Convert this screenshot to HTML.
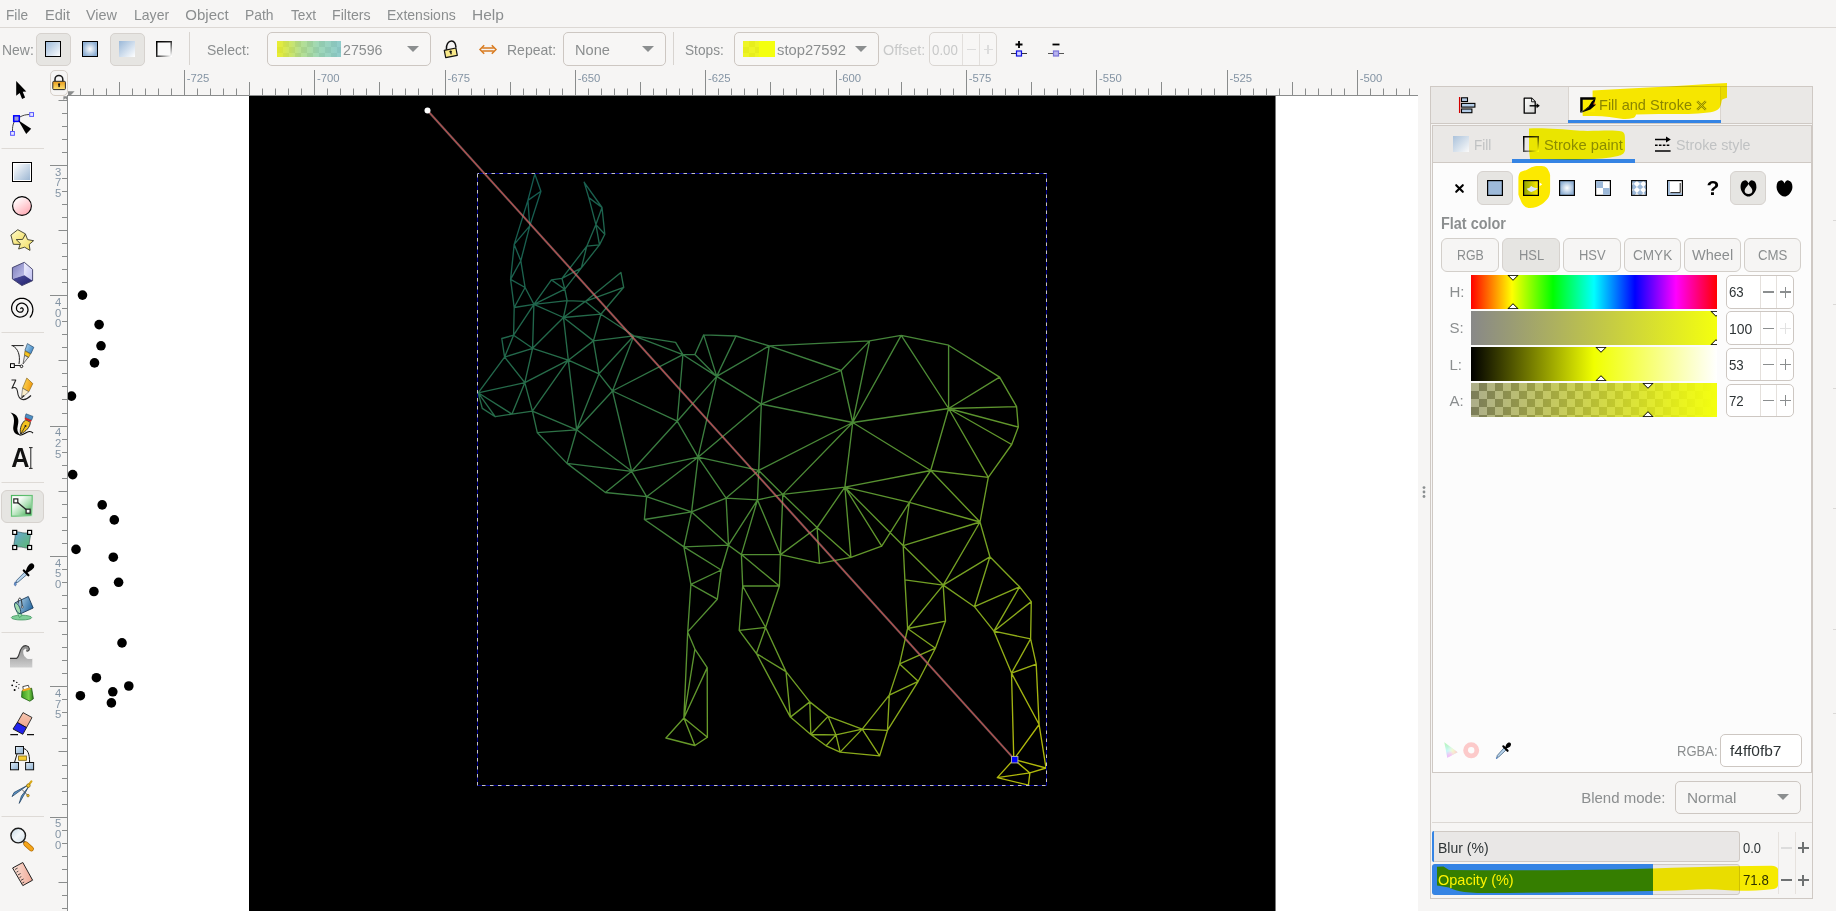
<!DOCTYPE html>
<html lang="en"><head><meta charset="utf-8"><title>Inkscape</title>
<style>
html,body{margin:0;padding:0}
body{width:1836px;height:911px;overflow:hidden;position:relative;background:#f6f5f4;font-family:"Liberation Sans",sans-serif;color:#8b8e8f}
.t{position:absolute;white-space:nowrap;color:#8b8e8f;transform-origin:0 50%}
.a{position:absolute;box-sizing:border-box}
.btn{position:absolute;box-sizing:border-box;border:1px solid #d3cfca;border-radius:5px;background:#f6f5f4}
.btn.on{background:#e6e5e2;border-color:#d6d2ce}
.combo{position:absolute;box-sizing:border-box;border:1px solid #cdc7c2;border-radius:5px;background:#f7f6f5}
.sep{position:absolute;background:#d8d4d0}
.arrow{position:absolute;width:0;height:0;border-left:6px solid transparent;border-right:6px solid transparent;border-top:6.3px solid #8b8e8f}
.chk{background-color:#fff;background-image:linear-gradient(45deg,#bbb 25%,transparent 25%,transparent 75%,#bbb 75%),linear-gradient(45deg,#bbb 25%,transparent 25%,transparent 75%,#bbb 75%);background-size:10px 10px;background-position:0 0,5px 5px}
#cv{position:absolute;left:0;top:0}
.rl text{font-family:"Liberation Sans",sans-serif;font-size:11.3px;fill:#8494a4}
svg{overflow:visible}
svg.i{position:absolute}
.hl{position:absolute;left:0;top:0;mix-blend-mode:multiply;pointer-events:none}
</style></head><body>
<div class="a" style="left:0;top:0;width:1836px;height:28px;border-bottom:1px solid #dcd8d4"></div><span class="t" style="left:5.7px;top:6.8px;font-size:15px;line-height:15px;transform:scaleX(0.911);">File</span><span class="t" style="left:44.6px;top:6.8px;font-size:15px;line-height:15px;transform:scaleX(0.971);">Edit</span><span class="t" style="left:86.2px;top:6.8px;font-size:15px;line-height:15px;transform:scaleX(0.963);">View</span><span class="t" style="left:134.2px;top:6.8px;font-size:15px;line-height:15px;transform:scaleX(0.936);">Layer</span><span class="t" style="left:185.3px;top:6.8px;font-size:15px;line-height:15px;">Object</span><span class="t" style="left:245.1px;top:6.8px;font-size:15px;line-height:15px;transform:scaleX(0.926);">Path</span><span class="t" style="left:290.5px;top:6.8px;font-size:15px;line-height:15px;transform:scaleX(0.913);">Text</span><span class="t" style="left:332.0px;top:6.8px;font-size:15px;line-height:15px;transform:scaleX(0.946);">Filters</span><span class="t" style="left:387.3px;top:6.8px;font-size:15px;line-height:15px;transform:scaleX(0.937);">Extensions</span><span class="t" style="left:472.0px;top:6.8px;font-size:15px;line-height:15px;transform:scaleX(1.036);">Help</span><span class="t" style="left:1.8px;top:41.6px;font-size:15px;line-height:15px;transform:scaleX(0.930);">New:</span><div class="btn on" style="left:35.5px;top:32.6px;width:35px;height:33px"></div><svg class="i" style="left:45px;top:41.2px" width="16" height="16" viewBox="0 0 16 16"><defs><linearGradient id="gi1" x1="0" y1="0" x2="1" y2="1"><stop offset="0" stop-color="#9ab8d8"/><stop offset="1" stop-color="#fff"/></linearGradient></defs><rect x=".5" y=".5" width="15" height="15" fill="url(#gi1)" stroke="#000"/></svg><svg class="i" style="left:82px;top:41.2px" width="16" height="16" viewBox="0 0 16 16"><defs><radialGradient id="gi2"><stop offset="0" stop-color="#fff"/><stop offset="1" stop-color="#8fb0d4"/></radialGradient></defs><rect x=".5" y=".5" width="15" height="15" fill="url(#gi2)" stroke="#000"/></svg><div class="btn on" style="left:109.5px;top:32.6px;width:35px;height:33px"></div><svg class="i" style="left:119px;top:41.2px" width="16" height="16" viewBox="0 0 16 16"><defs><linearGradient id="gi3" x1="0" y1="0" x2="1" y2="1"><stop offset="0" stop-color="#9ab8d8"/><stop offset="1" stop-color="#fff"/></linearGradient></defs><rect x="0" y="0" width="16" height="16" fill="url(#gi3)"/></svg><svg class="i" style="left:156px;top:41.2px" width="16" height="16" viewBox="0 0 16 16"><defs><linearGradient id="gi4" x1="0" y1="0" x2="1" y2="1"><stop offset="0" stop-color="#000"/><stop offset=".45" stop-color="#222"/><stop offset="1" stop-color="#fff"/></linearGradient></defs><rect x=".75" y=".75" width="14.5" height="14.5" fill="#fafafa" stroke="url(#gi4)" stroke-width="1.5"/></svg><div class="sep" style="left:189px;top:32px;width:1px;height:33px"></div><span class="t" style="left:207.4px;top:41.6px;font-size:15px;line-height:15px;transform:scaleX(0.932);">Select:</span><div class="combo" style="left:267px;top:32.3px;width:163.7px;height:33.3px"></div><div class="a chk" style="left:277px;top:40.9px;width:64px;height:16px;background-color:#fff;background-size:12px 12px;background-position:0 0,6px 6px"><div style="width:100%;height:100%;background:linear-gradient(90deg,rgba(232,236,30,.92),rgba(170,218,120,.84) 35%,rgba(140,208,170,.84) 65%,rgba(128,196,196,.88))"></div></div><span class="t" style="left:343.4px;top:41.6px;font-size:15px;line-height:15px;transform:scaleX(0.947);">27596</span><div class="arrow" style="left:406.9px;top:46.1px"></div><svg class="i" style="left:442px;top:39px" width="18" height="20" viewBox="0 0 18 20"><path d="M4.4 10.8C3.9 5.4 6.4 2 9.7 2.1 12.4 2.2 13.7 5 14 8.6" fill="none" stroke="#111" stroke-width="1.5"/><path d="M2.3 11.3L13.9 9 15.3 16.3 3.7 18.6Z" fill="#f9e98a" stroke="#111" stroke-width="1.2" stroke-linejoin="round"/><circle cx="8.6" cy="12.6" r="1.2" fill="#111"/><path d="M8.7 13L9.2 15.3" stroke="#111" stroke-width="1.3"/></svg><svg class="i" style="left:478.5px;top:43.5px" width="18" height="11" viewBox="0 0 18 11"><path d="M3.2 4h11.6M3.2 7h11.6" stroke="#d87a1e" stroke-width="1.3" fill="none"/><path d="M5.2 1.2L1 5.5l4.2 4.3M12.8 1.2L17 5.5l-4.2 4.3" stroke="#d87a1e" stroke-width="1.5" fill="none"/></svg><span class="t" style="left:506.8px;top:41.6px;font-size:15px;line-height:15px;transform:scaleX(0.933);">Repeat:</span><div class="combo" style="left:563.2px;top:32.3px;width:102.4px;height:33.3px"></div><span class="t" style="left:575.4px;top:41.6px;font-size:15px;line-height:15px;transform:scaleX(0.974);">None</span><div class="arrow" style="left:642.1px;top:46.1px"></div><div class="sep" style="left:673.3px;top:32px;width:1px;height:33px"></div><span class="t" style="left:684.5px;top:41.6px;font-size:15px;line-height:15px;transform:scaleX(0.912);">Stops:</span><div class="combo" style="left:733.5px;top:32.3px;width:145px;height:33.3px"></div><div class="a chk" style="left:743px;top:40.8px;width:15.7px;height:16px;background-size:12px 12px;background-position:0 0,6px 6px"><div style="width:100%;height:100%;background:rgba(236,244,12,.9)"></div></div><div class="a" style="left:758.7px;top:40.8px;width:16.4px;height:16px;background:#f4ff0f"></div><span class="t" style="left:777.1px;top:41.6px;font-size:15px;line-height:15px;transform:scaleX(0.984);">stop27592</span><div class="arrow" style="left:855.2px;top:46.1px"></div><span class="t" style="left:883.3px;top:41.6px;font-size:15px;line-height:15px;transform:scaleX(0.960);color:#c8c9c9;">Offset:</span><div class="combo" style="left:929px;top:32.3px;width:68px;height:33.3px;border-color:#dad6d2"></div><div class="sep" style="left:962px;top:33.6px;width:1px;height:31px;background:#e2dfdc"></div><div class="sep" style="left:979px;top:33.6px;width:1px;height:31px;background:#e2dfdc"></div><span class="t" style="left:932.3px;top:41.6px;font-size:15px;line-height:15px;transform:scaleX(0.885);color:#c8c9c9;">0.00</span><div class="a" style="left:966.5px;top:48.6px;width:9px;height:1.3px;background:#dcdcdc"></div><div class="a" style="left:983.5px;top:48.6px;width:9px;height:1.3px;background:#dcdcdc"></div><div class="a" style="left:987.4px;top:44.7px;width:1.3px;height:9px;background:#dcdcdc"></div><svg class="i" style="left:1011px;top:40px" width="16" height="18" viewBox="0 0 16 18"><path d="M8 1v7M4.5 4.5h7" stroke="#000" stroke-width="1.8"/><path d="M0 13.5h16" stroke="#333" stroke-width="1"/><rect x="5.5" y="11" width="5" height="5" fill="#cfd0ff" stroke="#1010e0" stroke-width="1.2"/></svg><svg class="i" style="left:1048px;top:40px" width="16" height="18" viewBox="0 0 16 18"><path d="M4.5 4.5h7" stroke="#000" stroke-width="1.8"/><path d="M0 13.5h16" stroke="#555" stroke-width="1"/><rect x="5.5" y="11" width="5" height="5" fill="#b8b4ee" stroke="#7a74d8" stroke-width="1.2"/></svg>
<div class="btn" style="left:50px;top:70px;width:18px;height:25.5px;border-color:#d6cfc8;border-radius:5px;background:#f6f5f4"></div>
<div class="btn on" style="left:1.2px;top:490.2px;width:42.6px;height:32.8px;border-radius:6px"></div>
<svg id="tb" class="i" style="left:0;top:0" width="80" height="911" viewBox="0 0 80 911">
<defs>
<linearGradient id="t_rect" x1="0" y1="0" x2="1" y2="1"><stop offset="0" stop-color="#fff"/><stop offset="1" stop-color="#9db7d3"/></linearGradient>
<linearGradient id="t_circ" x1="0.2" y1="0.1" x2="0.8" y2="0.95"><stop offset="0" stop-color="#fff"/><stop offset="1" stop-color="#ffaab4"/></linearGradient>
<linearGradient id="t_star" x1="0" y1="0" x2="1" y2="1"><stop offset="0" stop-color="#fffbd0"/><stop offset="1" stop-color="#f2dc55"/></linearGradient>
<linearGradient id="t_boxl" x1="0" y1="0" x2="1" y2="1"><stop offset="0" stop-color="#7a7ab8"/><stop offset="1" stop-color="#c4c4ee"/></linearGradient>
<linearGradient id="t_boxr" x1="0" y1="0" x2="1" y2="1"><stop offset="0" stop-color="#f0f0ff"/><stop offset="1" stop-color="#c0c0f0"/></linearGradient>
<linearGradient id="t_boxb" x1="0" y1="0" x2="1" y2="1"><stop offset="0" stop-color="#5050a0"/><stop offset="1" stop-color="#20206a"/></linearGradient>
<linearGradient id="t_grad" x1="0" y1="0" x2="1" y2="1"><stop offset="0" stop-color="#ffffff"/><stop offset="0.3" stop-color="#f2faf3"/><stop offset="0.62" stop-color="#a6dcae"/><stop offset="1" stop-color="#38a64c"/></linearGradient><linearGradient id="t_gradb" x1="0" y1="0" x2="1" y2="1"><stop offset="0" stop-color="#48b45c"/><stop offset="0.6" stop-color="#6cc47c"/><stop offset="1" stop-color="#d8f0dc"/></linearGradient>
<linearGradient id="t_mesh" x1="0" y1="0" x2="1" y2="1"><stop offset="0" stop-color="#6aa6dc"/><stop offset="0.55" stop-color="#62b09a"/><stop offset="1" stop-color="#5cb874"/></linearGradient>
<linearGradient id="t_lock" x1="0" y1="0" x2="0" y2="1"><stop offset="0" stop-color="#e89a18"/><stop offset="1" stop-color="#ffe372"/></linearGradient>
<linearGradient id="t_tweak" x1="0" y1="0" x2="0" y2="1"><stop offset="0" stop-color="#8a8a8a"/><stop offset="1" stop-color="#cfcfcf"/></linearGradient>
<linearGradient id="t_can" x1="0" y1="0" x2="1" y2="0"><stop offset="0" stop-color="#3c9a22"/><stop offset="0.6" stop-color="#7ad04a"/><stop offset="1" stop-color="#2a7a18"/></linearGradient>
<linearGradient id="t_bucket" x1="0" y1="0" x2="1" y2="0.4"><stop offset="0" stop-color="#cfe8f4"/><stop offset="1" stop-color="#2f6fa6"/></linearGradient>
<linearGradient id="t_pen" x1="0" y1="0" x2="1" y2="0.6"><stop offset="0" stop-color="#b8dcf4"/><stop offset="1" stop-color="#3f86c2"/></linearGradient>
<linearGradient id="t_pencil" x1="0" y1="0" x2="1" y2="0.3"><stop offset="0" stop-color="#ffe060"/><stop offset="1" stop-color="#f09a10"/></linearGradient>
<linearGradient id="t_rul" x1="0" y1="0" x2="1" y2="0"><stop offset="0" stop-color="#fbe4da"/><stop offset="1" stop-color="#efa896"/></linearGradient>
<linearGradient id="t_lens" x1="0" y1="0" x2="1" y2="1"><stop offset="0" stop-color="#c4d8e6"/><stop offset="0.5" stop-color="#f2f7fa"/><stop offset="1" stop-color="#cfdde8"/></linearGradient>
<linearGradient id="t_sq" x1="0" y1="0" x2="1" y2="1"><stop offset="0" stop-color="#dce9f4"/><stop offset="1" stop-color="#8fb2d2"/></linearGradient>
<linearGradient id="t_era" x1="0" y1="0" x2="0" y2="1"><stop offset="0" stop-color="#f6c6b0"/><stop offset="1" stop-color="#eda48c"/></linearGradient>
</defs>
<!-- separators -->
<g stroke="#dedad6" stroke-width="1"><path d="M1.5 148.5H44M1.5 332.5H44M1.5 482.5H44M1.5 632.5H44M1.5 816.5H44"/></g>
<!-- lock -->
<path d="M55 81.5v-2.2a3.9 3.9 0 0 1 7.8 0v2.2" fill="none" stroke="#1a1a1a" stroke-width="1.5"/>
<rect x="52.8" y="81.3" width="12.6" height="8.3" rx="1" fill="url(#t_lock)" stroke="#2a2a2a" stroke-width="1"/>
<circle cx="59.1" cy="84.3" r="1.1" fill="#111"/><rect x="58.4" y="84.5" width="1.4" height="2.6" fill="#111"/>
<!-- ruler corner marks -->
<path d="M68 91.3h6.6l-3.6 3.6h-3z" fill="#8a8c8c"/><path d="M63.4 96.5h3.8v3.4z" fill="#8a8c8c" transform="translate(0 0)"/><path d="M63.4 96.6h3.8l-3.8 3.4z" fill="#8a8c8c"/>
<!-- selector arrow -->
<path d="M16.2 81V95.8L19.7 92.9 22.1 98.9 25.1 97.4 22.7 91.8 26.3 91.4Z" fill="#000"/>
<!-- node tool -->
<path d="M19.5 117.2C23 115.2 26 114.6 29.3 114.5M14.3 121.5C12.6 125 12.4 128 12.5 131" fill="none" stroke="#444" stroke-width="1"/>
<rect x="13.7" y="115.8" width="5.6" height="5.6" fill="#9a9adc" stroke="#0000ff" stroke-width="1.5"/>
<rect x="29.7" y="112.6" width="3.8" height="3.8" fill="#e8e8ff" stroke="#5656ff" stroke-width="1"/>
<rect x="10.6" y="131.5" width="3.8" height="3.8" fill="#e8e8ff" stroke="#5656ff" stroke-width="1"/>
<path d="M18.3 120.3L31.2 128.8 26.2 134.1Z" fill="#000"/>
<!-- rect -->
<rect x="12.5" y="162.5" width="19" height="19" fill="#fff" stroke="#000" stroke-width="1"/><rect x="14" y="164" width="16" height="16" fill="url(#t_rect)"/>
<!-- circle -->
<circle cx="22" cy="206" r="9.4" fill="url(#t_circ)" stroke="#000" stroke-width="1.1"/>
<!-- star -->
<path d="M17.8 229.7L25.5 233.9 22.6 244.5 13.3 244.3 10.9 235Z" fill="url(#t_star)" stroke="#3a3a2a" stroke-width=".9" stroke-linejoin="round"/>
<path d="M25.5 234.2L27.6 239.6 33.6 240.7 29.2 244.4 30 250.4 24.6 247.2 18.6 249 20.4 243.6 16.2 239.6 22.6 239.4Z" fill="url(#t_star)" stroke="#3a3a2a" stroke-width=".9" stroke-linejoin="round"/>
<!-- 3d box -->
<path d="M24.3 262.3L12.4 267.6V278.9L24.3 275.3Z" fill="url(#t_boxl)"/>
<path d="M24.3 262.3L32.6 269.4V280.7L24.3 275.3Z" fill="url(#t_boxr)"/>
<path d="M24.3 275.3L32.6 280.7 21.9 285.6 12.4 278.9Z" fill="url(#t_boxb)"/>
<path d="M24.3 262.3L32.6 269.4V280.7L21.9 285.6 12.4 278.9V267.6Z" fill="none" stroke="#3c3c66" stroke-width=".9" stroke-linejoin="round"/>
<!-- spiral -->
<path d="M20.8 308.6L20.8 308.4L20.9 308.2L21.0 308.1L21.1 308.0L21.3 307.9L21.6 307.9L21.8 307.9L22.1 307.9L22.4 308.1L22.6 308.3L22.8 308.5L23.0 308.8L23.1 309.2L23.2 309.6L23.1 310.0L23.0 310.4L22.8 310.8L22.5 311.2L22.2 311.6L21.7 311.9L21.2 312.1L20.7 312.2L20.1 312.2L19.5 312.2L18.9 312.0L18.3 311.6L17.7 311.2L17.3 310.7L16.9 310.1L16.6 309.4L16.5 308.6L16.5 307.8L16.6 307.0L16.9 306.2L17.3 305.4L17.9 304.8L18.5 304.2L19.3 303.7L20.2 303.4L21.2 303.2L22.2 303.2L23.2 303.3L24.2 303.7L25.1 304.2L26.0 304.9L26.7 305.7L27.3 306.7L27.7 307.8L27.9 308.9L28.0 310.1L27.8 311.3L27.4 312.5L26.8 313.6L26.0 314.7L25.0 315.5L23.8 316.2L22.6 316.7L21.2 317.0L19.8 317.1L18.4 316.9L17.0 316.4L15.7 315.8L14.5 314.9L13.5 313.7L12.7 312.4L12.0 311.0L11.7 309.5L11.6 307.8L11.8 306.2L12.3 304.6L13.0 303.1L14.0 301.8L15.2 300.6L16.7 299.6L18.3 298.9L20.0 298.4L21.9 298.3L23.7 298.4L25.5 298.9L27.2 299.7L28.8 300.8L30.1 302.2L31.3 303.8L32.1 305.5L32.6 307.5L32.9 309.5L32.7 311.5L32.2 313.5L31.4 315.4L30.2 317.2" fill="none" stroke="#000" stroke-width="1.25" stroke-linecap="round" stroke-linejoin="round"/>
<!-- bezier pen -->
<path d="M11.5 345.6H23.6M12.4 345.6C18 348.5 20.5 355 19 364" fill="none" stroke="#222" stroke-width="1"/>
<path d="M14.4 365.5H20.4" stroke="#222" stroke-width="1"/><rect x="10.5" y="363.7" width="3.8" height="3.8" fill="#fff" stroke="#000" stroke-width="1"/><circle cx="21.5" cy="366.3" r="1.3" fill="#fff" stroke="#000" stroke-width=".9"/>
<path d="M27.4 343.6L33.8 347.3 30.9 353.8 24.9 350.4Z" fill="url(#t_pen)" stroke="#2a4a6a" stroke-width=".7"/>
<path d="M25 351L30.4 354 28.6 357.4 24.4 355.1Z" fill="#f4c21e" stroke="#6a5210" stroke-width=".6"/>
<path d="M24.6 355.3L28.3 357.3 23 364Z" fill="#e8e8e8" stroke="#333" stroke-width=".7"/>
<!-- pencil -->
<path d="M11.5 380H15.8L12 388.3C14.5 386.5 17 388 17.4 391 17.8 395 19.5 399.8 23.5 399.6 26.5 399.4 29 397.5 31 395.5" fill="none" stroke="#222" stroke-width="1.1" stroke-linejoin="round"/>
<path d="M26.8 378L32.8 383.6 28.8 391.8 22.6 388.2Z" fill="url(#t_pencil)" stroke="#7a5a10" stroke-width=".6"/>
<path d="M22.6 388.2L28.8 391.8 21.3 398.4Z" fill="#f8ecc8" stroke="#555" stroke-width=".6"/>
<path d="M23 395L24.7 396 21.3 398.4Z" fill="#222"/>
<!-- calligraphy -->
<path d="M10.4 412.6C17.5 414 19.6 419.5 17.8 425.5 16.6 429.5 17.5 433 20.5 435.2 15.5 435.2 12.3 431.5 13.4 426 14.6 420.5 14.5 416 10.4 412.6Z" fill="#000"/>
<path d="M19.5 435.3C24 435.3 26 431.5 29.5 431.5 31 431.5 32.3 432.3 33 433.2" fill="none" stroke="#000" stroke-width="1.1"/>
<path d="M25.8 419.8L30.3 422.2C30.3 427 26 431.5 20.5 434 19.5 428 21.8 422.5 25.8 419.8Z" fill="#f4c21e" stroke="#222" stroke-width=".9"/>
<path d="M21 433.5L25.3 426.3" stroke="#222" stroke-width=".8"/><circle cx="25.5" cy="426" r="1" fill="#222"/>
<path d="M26 413.8L33 416.4 31.6 420.2 25 417.5Z" fill="#4e8fc4" stroke="#24486a" stroke-width=".6"/>
<path d="M25 417.6L31.6 420.3 31 422 24.6 419.3Z" fill="#d02020"/>
<!-- text tool -->
<text transform="translate(11.2 467.4) scale(.9 1)" font-family="Liberation Sans, sans-serif" font-weight="bold" font-size="28" fill="#111">A</text>
<path d="M30.8 448V468M29 447.6h3.6M29 468.4h3.6" stroke="#222" stroke-width="1"/>
<!-- gradient tool -->
<rect x="10.9" y="494.9" width="21.9" height="21.9" fill="url(#t_gradb)"/><rect x="12.1" y="496.1" width="19.5" height="19.5" fill="url(#t_grad)"/>
<path d="M15.8 500.9L28.1 511.2" stroke="#222" stroke-width="1.3"/>
<rect x="13.8" y="498.9" width="4" height="4" fill="#fff" stroke="#222" stroke-width="1.2"/><rect x="26.1" y="509.2" width="4" height="4" fill="#fff" stroke="#222" stroke-width="1.2"/>
<!-- mesh gradient -->
<path d="M14.7 532.4C18 530.3 22.5 534.6 29.6 532.4 32 536 28 541.5 29.6 547.5 26 549.6 21.5 545.3 14.7 547.5 12.4 544 16.4 538.5 14.7 532.4Z" fill="url(#t_mesh)" stroke="#2a4a4a" stroke-width=".6"/>
<g fill="#fff" stroke="#000" stroke-width="1.2"><rect x="12.7" y="530.4" width="4" height="4"/><rect x="27.6" y="530.4" width="4" height="4"/><rect x="12.7" y="545.5" width="4" height="4"/><rect x="27.6" y="545.5" width="4" height="4"/></g>
<!-- dropper -->
<path d="M25 571.8L27.3 574.2 18 582.2 16 582.6 16.5 580.4Z" fill="#b8d4ec" stroke="#3a5a7a" stroke-width=".8"/>
<path d="M23.8 570.5L28.4 575.3" stroke="#000" stroke-width="2.2" stroke-linecap="round"/>
<path d="M26.3 572.5C27 569.5 28.5 566 30.5 564.5 32.5 563.5 34.2 565.3 33.2 567.3 31.8 569.3 28.5 571 26.3 572.5Z" fill="#000" stroke="#000" stroke-width="1.6" stroke-linejoin="round"/>
<path d="M15.3 581.8C16.6 583.6 16.6 585.4 15.3 585.8 14 585.4 14 583.6 15.3 581.8Z" fill="#6aa0d8" stroke="#2a4a8a" stroke-width=".6"/>
<!-- bucket -->
<ellipse cx="21.5" cy="617.6" rx="10.2" ry="2.4" fill="#7fcf98" stroke="#2f8a50" stroke-width=".7"/>
<path d="M15 603.5C15.5 609 17 613 19.5 617.5L22 615.5C20 611.5 19.5 608 19.5 604.5Z" fill="#8fd8a4" stroke="#2f8a50" stroke-width=".6"/>
<path d="M15 602.8L28.3 596.5 33.2 608 20.4 613.8Z" fill="url(#t_bucket)" stroke="#1a3a5a" stroke-width=".9" stroke-linejoin="round"/>
<ellipse cx="17.6" cy="608.2" rx="2.2" ry="5.8" transform="rotate(-24 17.6 608.2)" fill="#9fdcae" stroke="#1a3a5a" stroke-width=".8"/>
<path d="M18.3 603.5C17.5 598 20.5 596 21.5 600.5L22.3 606.8" fill="none" stroke="#222" stroke-width=".9"/><circle cx="22.3" cy="607" r="1" fill="#fff" stroke="#222" stroke-width=".6"/>
<!-- tweak -->
<path d="M10 658.4H16.5C19.5 657 19 651 22 647.5 24.5 644.5 28.8 645.5 29.3 648.5 29.6 650.8 27.5 651.8 26.3 650.6 27 648.5 24.8 648.3 24 650 22.8 653 24.8 658 28 658.4H32.3V667.5H10Z" fill="url(#t_tweak)"/>
<path d="M10 658.4H16.5C19.5 657 19 651 22 647.5 24.5 644.5 28.8 645.5 29.3 648.5 29.6 650.8 27.5 651.8 26.3 650.6" fill="none" stroke="#3a3a3a" stroke-width="1.1"/>
<path d="M24 650C22.8 653 24.8 658 28 658.4H32.3" fill="none" stroke="#fff" stroke-width=".8"/>
<!-- spray -->
<g fill="#000"><circle cx="13.8" cy="680.8" r=".9"/><circle cx="12.2" cy="685.3" r=".9"/><circle cx="14.6" cy="690" r="1"/><circle cx="16.8" cy="682.4" r=".7"/><circle cx="16.2" cy="686.5" r=".7"/><circle cx="19" cy="684.5" r=".6"/><circle cx="18.6" cy="688" r=".6"/></g>
<path d="M22.8 686.6L28.3 685.3 29.4 688.6 23.4 690Z" fill="#fff" stroke="#222" stroke-width=".8"/>
<path d="M22 690.8L31.6 688.2 33.4 698.8 29.8 701.2 21.6 697.2Z" fill="url(#t_can)" stroke="#1a5a10" stroke-width=".8" stroke-linejoin="round"/>
<path d="M22.4 689.6L30.2 687.5 30.6 689.4 22.6 691.6Z" fill="#f0a820"/>
<!-- eraser -->
<path d="M23 712.6L32 717.5 26.5 727.6 17.3 722.5Z" fill="url(#t_era)" stroke="#222" stroke-width=".9" stroke-linejoin="round"/>
<path d="M17.3 722.5L26.5 727.6 22.8 734.3 13 729Z" fill="#2222ee" stroke="#111" stroke-width=".9" stroke-linejoin="round"/>
<path d="M10.3 734.6H18M27 734.6H34" stroke="#111" stroke-width="1.1"/>
<!-- connector -->
<path d="M17 754L14.5 762.5M23.5 748.5C27.5 749.5 29.6 753 29.6 762.5" fill="none" stroke="#111" stroke-width="1"/>
<g stroke="#111" stroke-width="1"><rect x="15.5" y="746.5" width="8" height="7.3" fill="url(#t_sq)"/><rect x="10.5" y="762.5" width="8" height="7.3" fill="url(#t_sq)"/><rect x="25.6" y="762.5" width="8" height="7.3" fill="url(#t_sq)"/></g>
<rect x="18.6" y="756" width="7.8" height="4.3" fill="#f6cc30" stroke="#7a6210" stroke-width=".8"/>
<!-- calipers -->
<path d="M28 785L12 796.6 14 792.5Z" fill="#5a94c6" stroke="#1a3a5a" stroke-width=".7" stroke-linejoin="round"/>
<path d="M28.8 786.4L19.2 803.4 21.4 796Z" fill="#5a94c6" stroke="#1a3a5a" stroke-width=".7" stroke-linejoin="round"/>
<path d="M22 789.5L28 795.6" stroke="#444" stroke-width=".8"/><circle cx="28" cy="795.6" r="1.3" fill="#e8b820" stroke="#6a5210" stroke-width=".5"/>
<path d="M27.6 786.4L31.4 781.3" stroke="#d8a818" stroke-width="2.2" stroke-linecap="round"/><circle cx="28.4" cy="785.6" r="1.8" fill="#f0c428" stroke="#6a5210" stroke-width=".6"/>
<!-- zoom -->
<path d="M23.5 841.5L26 844" stroke="#555" stroke-width="2.6"/>
<path d="M25.8 843.8L31.4 848.8" stroke="#b06a00" stroke-width="5" stroke-linecap="round"/><path d="M25.8 843.8L31.4 848.8" stroke="#f5a51a" stroke-width="3.6" stroke-linecap="round"/>
<circle cx="18.2" cy="835.6" r="7.3" fill="url(#t_lens)" stroke="#1c1c1c" stroke-width="1.4"/>
<!-- measure ruler -->
<path d="M22.8 862.5L32.6 880.2 22.8 885.6 12.6 868Z" fill="url(#t_rul)" stroke="#222" stroke-width="1" stroke-linejoin="round"/>
<path d="M15 869.5l2.6-1.4M16.5 872.2l1.8-1M18 874.9l2.6-1.4M19.5 877.6l1.8-1M21 880.3l2.6-1.4M22.4 883l1.8-1" stroke="#222" stroke-width=".8"/>
</svg>

<svg id="cv" width="1836" height="911" viewBox="0 0 1836 911">
<defs>
<linearGradient id="bg" gradientUnits="userSpaceOnUse" x1="427.5" y1="110.5" x2="1014.5" y2="759.4">
<stop offset="0.0" stop-color="#064c54"/><stop offset="0.1" stop-color="#105652"/><stop offset="0.2" stop-color="#1a604e"/><stop offset="0.3" stop-color="#256b4a"/><stop offset="0.4" stop-color="#317544"/><stop offset="0.5" stop-color="#3e803d"/><stop offset="0.6" stop-color="#4d8b35"/><stop offset="0.7" stop-color="#60962c"/><stop offset="0.8" stop-color="#76a122"/><stop offset="0.9" stop-color="#91ac17"/><stop offset="1.0" stop-color="#b0b80b"/>
</linearGradient>
<clipPath id="cc"><rect x="68" y="96" width="1350" height="815"/></clipPath>
</defs>
<rect x="68" y="96" width="1350" height="815" fill="#fff"/>
<g clip-path="url(#cc)">
<rect x="249" y="96" width="1027" height="830" fill="#000"/>
<rect x="1275" y="96" width="1" height="815" fill="#7a7a7a"/>
<g fill="#000"><circle cx="82.5" cy="295.1" r="4.8"/><circle cx="99.1" cy="324.6" r="4.8"/><circle cx="101" cy="345.8" r="4.8"/><circle cx="94.5" cy="362.9" r="4.8"/><circle cx="71.5" cy="396.1" r="4.8"/><circle cx="72.7" cy="474.6" r="4.8"/><circle cx="102.2" cy="504.9" r="4.8"/><circle cx="114.3" cy="519.9" r="4.8"/><circle cx="76" cy="549.4" r="4.8"/><circle cx="113.3" cy="557.2" r="4.8"/><circle cx="118.6" cy="582.3" r="4.8"/><circle cx="93.9" cy="591.5" r="4.8"/><circle cx="122" cy="642.9" r="4.8"/><circle cx="96.4" cy="677.7" r="4.8"/><circle cx="128.8" cy="686" r="4.8"/><circle cx="112.8" cy="691.8" r="4.8"/><circle cx="80.4" cy="695.7" r="4.8"/><circle cx="111.4" cy="702.9" r="4.8"/></g>
<path d="M534.8 174.1L540.9 191.3M534.8 174.1L527.9 200.4M540.9 191.3L527.9 200.4M540.9 191.3L529.8 225.9M527.9 200.4L529.8 225.9M527.9 200.4L514.2 244.4M529.8 225.9L514.2 244.4M529.8 225.9L520.8 260.8M514.2 244.4L520.8 260.8M514.2 244.4L510.6 279.4M520.8 260.8L510.6 279.4M520.8 260.8L525.1 287.5M510.6 279.4L525.1 287.5M510.6 279.4L514.2 307.5M525.1 287.5L514.2 307.5M525.1 287.5L533.9 304.3M514.2 307.5L533.9 304.3M584.2 182.3L588.8 197.6M584.2 182.3L602.0 207.5M588.8 197.6L602.0 207.5M588.8 197.6L595.9 224.6M602.0 207.5L595.9 224.6M602.0 207.5L604.8 234.2M595.9 224.6L604.8 234.2M595.9 224.6L586.8 246.2M595.9 224.6L599.5 244.9M604.8 234.2L599.5 244.9M586.8 246.2L599.5 244.9M586.8 246.2L581.4 267.9M599.5 244.9L581.4 267.9M586.8 246.2L562.0 278.3M581.4 267.9L562.0 278.3M581.4 267.9L564.8 289.2M562.0 278.3L551.4 279.9M562.0 278.3L564.8 289.2M551.4 279.9L564.8 289.2M551.4 279.9L533.9 304.3M564.8 289.2L533.9 304.3M564.8 289.2L567.1 300.6M533.9 304.3L567.1 300.6M567.1 300.6L585.3 301.4M567.1 300.6L563.5 317.5M533.9 304.3L563.5 317.5M563.5 317.5L585.3 301.4M585.3 301.4L620.9 272.4M620.9 272.4L623.7 287.3M585.3 301.4L623.7 287.3M623.7 287.3L600.9 314.2M585.3 301.4L600.9 314.2M600.9 314.2L633.9 335.8M563.5 317.5L600.9 314.2M600.9 314.2L593.4 340.9M563.5 317.5L593.4 340.9M563.5 317.5L568.3 360.2M563.5 317.5L532.6 348.3M533.9 304.3L532.6 348.3M533.9 304.3L513.6 335.2M514.2 307.5L513.6 335.2M513.6 335.2L501.8 338.5M501.8 338.5L504.6 357.1M513.6 335.2L504.6 357.1M513.6 335.2L532.6 348.3M504.6 357.1L532.6 348.3M532.6 348.3L568.3 360.2M532.6 348.3L524.8 382.7M504.6 357.1L524.8 382.7M504.6 357.1L478.2 392.8M524.8 382.7L478.2 392.8M568.3 360.2L524.8 382.7M593.4 340.9L568.3 360.2M593.4 340.9L633.9 335.8M593.4 340.9L599.0 373.8M568.3 360.2L599.0 373.8M568.3 360.2L532.4 411.1M568.3 360.2L576.7 429.8M524.8 382.7L532.4 411.1M524.8 382.7L512.0 414.1M478.2 392.8L482.3 408.4M478.2 392.8L495.2 416.7M478.2 392.8L512.0 414.1M482.3 408.4L495.2 416.7M495.2 416.7L512.0 414.1M512.0 414.1L532.4 411.1M532.4 411.1L576.7 429.8M599.0 373.8L576.7 429.8M599.0 373.8L612.5 391.0M612.5 391.0L576.7 429.8M633.9 335.8L675.6 342.4M633.9 335.8L682.9 354.7M675.6 342.4L682.9 354.7M682.9 354.7L694.9 354.5M694.9 354.5L703.7 334.9M703.7 334.9L736.0 336.0M703.7 334.9L716.7 376.4M694.9 354.5L716.7 376.4M682.9 354.7L716.7 376.4M736.0 336.0L716.7 376.4M736.0 336.0L769.2 345.9M716.7 376.4L769.2 345.9M716.7 376.4L761.3 404.1M769.2 345.9L761.3 404.1M633.9 335.8L599.0 373.8M633.9 335.8L612.5 391.0M682.9 354.7L612.5 391.0M682.9 354.7L677.2 421.2M716.7 376.4L677.2 421.2M716.7 376.4L698.1 457.2M612.5 391.0L677.2 421.2M612.5 391.0L631.7 471.3M677.2 421.2L631.7 471.3M677.2 421.2L698.1 457.2M698.1 457.2L761.3 404.1M698.1 457.2L631.7 471.3M698.1 457.2L646.6 496.7M698.1 457.2L691.6 511.9M698.1 457.2L726.1 498.1M698.1 457.2L758.7 470.4M761.3 404.1L758.7 470.4M758.7 470.4L726.1 498.1M758.7 470.4L757.5 499.9M758.7 470.4L782.8 494.4M726.1 498.1L757.5 499.9M757.5 499.9L782.8 494.4M726.1 498.1L691.6 511.9M646.6 496.7L691.6 511.9M631.7 471.3L646.6 496.7M631.7 471.3L605.4 492.5M605.4 492.5L646.6 496.7M532.4 411.1L537.3 432.7M537.3 432.7L576.7 429.8M537.3 432.7L567.0 463.4M576.7 429.8L567.0 463.4M576.7 429.8L631.7 471.3M567.0 463.4L631.7 471.3M567.0 463.4L605.4 492.5M646.6 496.7L644.4 519.5M644.4 519.5L691.6 511.9M644.4 519.5L683.9 546.9M691.6 511.9L683.9 546.9M769.2 345.9L869.6 340.9M869.6 340.9L901.2 335.4M901.2 335.4L948.6 345.2M769.2 345.9L841.1 370.5M869.6 340.9L841.1 370.5M761.3 404.1L841.1 370.5M841.1 370.5L852.7 422.5M869.6 340.9L852.7 422.5M901.2 335.4L852.7 422.5M901.2 335.4L948.6 408.5M852.7 422.5L948.6 408.5M761.3 404.1L852.7 422.5M852.7 422.5L758.7 470.4M852.7 422.5L782.8 494.4M852.7 422.5L844.9 487.2M852.7 422.5L930.7 470.5M948.6 408.5L930.7 470.5M844.9 487.2L930.7 470.5M844.9 487.2L782.8 494.4M844.9 487.2L909.4 502.3M930.7 470.5L909.4 502.3M948.6 345.2L948.6 408.5M948.6 345.2L999.6 377.1M999.6 377.1L1016.6 406.7M1016.6 406.7L1018.3 427.1M1018.3 427.1L1011.7 444.5M1011.7 444.5L988.3 477.3M948.6 408.5L999.6 377.1M948.6 408.5L1016.6 406.7M948.6 408.5L1018.3 427.1M948.6 408.5L1011.7 444.5M948.6 408.5L988.3 477.3M930.7 470.5L988.3 477.3M988.3 477.3L980.0 522.0M930.7 470.5L980.0 522.0M909.4 502.3L980.0 522.0M691.6 511.9L728.5 545.2M726.1 498.1L728.5 545.2M683.9 546.9L728.5 545.2M683.9 546.9L721.2 570.0M728.5 545.2L721.2 570.0M683.9 546.9L690.9 584.3M721.2 570.0L690.9 584.3M721.2 570.0L717.3 599.2M690.9 584.3L717.3 599.2M690.9 584.3L687.7 631.9M717.3 599.2L687.7 631.9M687.7 631.9L694.9 649.1M694.9 649.1L707.2 667.6M757.5 499.9L728.5 545.2M728.5 545.2L741.4 554.6M757.5 499.9L741.4 554.6M757.5 499.9L780.5 554.6M782.8 494.4L780.5 554.6M741.4 554.6L780.5 554.6M741.4 554.6L742.7 586.0M741.4 554.6L779.4 586.0M780.5 554.6L779.4 586.0M742.7 586.0L779.4 586.0M742.7 586.0L739.2 630.3M742.7 586.0L765.6 627.5M779.4 586.0L765.6 627.5M739.2 630.3L765.6 627.5M739.2 630.3L756.4 653.5M765.6 627.5L756.4 653.5M765.6 627.5L786.0 671.6M756.4 653.5L786.0 671.6M780.5 554.6L817.1 527.5M780.5 554.6L819.5 563.4M817.1 527.5L819.5 563.4M782.8 494.4L817.1 527.5M817.1 527.5L844.9 487.2M687.7 631.9L683.9 718.0M694.9 649.1L683.9 718.0M707.2 667.6L683.9 718.0M707.2 667.6L707.4 737.3M683.9 718.0L665.9 738.0M683.9 718.0L694.9 745.5M683.9 718.0L707.4 737.3M665.9 738.0L694.9 745.5M694.9 745.5L707.4 737.3M756.4 653.5L790.4 717.1M786.0 671.6L790.4 717.1M786.0 671.6L809.8 701.9M790.4 717.1L809.8 701.9M790.4 717.1L810.8 734.5M809.8 701.9L810.8 734.5M809.8 701.9L828.1 716.4M810.8 734.5L828.1 716.4M810.8 734.5L836.0 734.9M828.1 716.4L836.0 734.9M810.8 734.5L826.1 745.8M836.0 734.9L826.1 745.8M826.1 745.8L840.1 752.1M836.0 734.9L840.1 752.1M828.1 716.4L862.2 729.1M836.0 734.9L862.2 729.1M840.1 752.1L862.2 729.1M840.1 752.1L879.6 755.9M862.2 729.1L879.6 755.9M862.2 729.1L887.5 730.3M879.6 755.9L887.5 730.3M862.2 729.1L889.3 695.1M889.3 695.1L887.5 730.3M887.5 730.3L918.2 681.3M889.3 695.1L918.2 681.3M889.3 695.1L899.6 663.9M899.6 663.9L918.2 681.3M918.2 681.3L935.4 648.2M899.6 663.9L935.4 648.2M907.6 628.5L899.6 663.9M907.6 628.5L935.4 648.2M907.6 628.5L945.5 621.1M945.5 621.1L935.4 648.2M844.9 487.2L850.9 557.4M844.9 487.2L881.7 546.2M844.9 487.2L903.2 545.7M817.1 527.5L850.9 557.4M819.5 563.4L850.9 557.4M850.9 557.4L881.7 546.2M881.7 546.2L909.4 502.3M909.4 502.3L903.2 545.7M903.2 545.7L980.0 522.0M903.2 545.7L904.9 579.8M903.2 545.7L943.2 585.1M904.9 579.8L943.2 585.1M904.9 579.8L907.6 628.5M943.2 585.1L907.6 628.5M943.2 585.1L945.5 621.1M943.2 585.1L980.0 522.0M943.2 585.1L989.9 556.8M943.2 585.1L974.4 606.7M980.0 522.0L989.9 556.8M989.9 556.8L974.4 606.7M974.4 606.7L993.9 631.2M989.9 556.8L1019.6 586.8M1019.6 586.8L1031.3 601.6M1031.3 601.6L1030.6 638.9M1030.6 638.9L1036.2 664.1M974.4 606.7L1019.6 586.8M1019.6 586.8L993.9 631.2M1031.3 601.6L993.9 631.2M993.9 631.2L1030.6 638.9M993.9 631.2L1011.5 673.1M1030.6 638.9L1011.5 673.1M1036.2 664.1L1011.5 673.1M1036.2 664.1L1039.1 724.5M1011.5 673.1L1039.1 724.5M1011.5 673.1L1013.8 759.4M1039.1 724.5L1013.8 759.4M1039.1 724.5L1046.0 768.0M1013.8 759.4L1046.0 768.0M1013.8 759.4L1029.9 772.9M1013.8 759.4L997.3 777.6M1046.0 768.0L1029.9 772.9M1029.9 772.9L997.3 777.6M1029.9 772.9L1028.4 785.2M997.3 777.6L1028.4 785.2" stroke="url(#bg)" stroke-width="1.35" fill="none" stroke-linecap="round"/>
<rect x="477.5" y="173.5" width="569" height="612" fill="none" stroke="#00008b" stroke-width="1"/>
<rect x="477.5" y="173.5" width="569" height="612" fill="none" stroke="#c4c4c4" stroke-width="1" stroke-dasharray="3.5 4.5" stroke-dashoffset="2"/>
<path d="M427.5 110.5L1014.5 759.4" stroke="#c09090" stroke-width="2.1" opacity=".6"/>
<path d="M427.5 110.5L1014.5 759.4" stroke="#d04848" stroke-width=".9"/>
<circle cx="427.5" cy="110.5" r="3" fill="#fff"/>
<rect x="1011.5" y="756.5" width="6.4" height="6.4" fill="#0000ff" stroke="#a8a8a8" stroke-width="1"/>
</g>
<g stroke="#8a8c8c" stroke-width="1" fill="none"><path d="M80.5 88.5V95"/><path d="M93.5 88.5V95"/><path d="M106.5 88.5V95"/><path d="M119.5 82V95"/><path d="M132.5 88.5V95"/><path d="M145.5 88.5V95"/><path d="M158.5 88.5V95"/><path d="M171.5 88.5V95"/><path d="M184.5 70V95"/><path d="M197.5 88.5V95"/><path d="M210.5 88.5V95"/><path d="M223.5 88.5V95"/><path d="M236.5 88.5V95"/><path d="M249.5 82V95"/><path d="M262.5 88.5V95"/><path d="M275.5 88.5V95"/><path d="M288.5 88.5V95"/><path d="M301.5 88.5V95"/><path d="M314.5 70V95"/><path d="M327.5 88.5V95"/><path d="M340.5 88.5V95"/><path d="M353.5 88.5V95"/><path d="M366.5 88.5V95"/><path d="M379.5 82V95"/><path d="M392.5 88.5V95"/><path d="M405.5 88.5V95"/><path d="M418.5 88.5V95"/><path d="M432.5 88.5V95"/><path d="M445.5 70V95"/><path d="M458.5 88.5V95"/><path d="M471.5 88.5V95"/><path d="M484.5 88.5V95"/><path d="M497.5 88.5V95"/><path d="M510.5 82V95"/><path d="M523.5 88.5V95"/><path d="M536.5 88.5V95"/><path d="M549.5 88.5V95"/><path d="M562.5 88.5V95"/><path d="M575.5 70V95"/><path d="M588.5 88.5V95"/><path d="M601.5 88.5V95"/><path d="M614.5 88.5V95"/><path d="M627.5 88.5V95"/><path d="M640.5 82V95"/><path d="M653.5 88.5V95"/><path d="M666.5 88.5V95"/><path d="M679.5 88.5V95"/><path d="M692.5 88.5V95"/><path d="M705.5 70V95"/><path d="M718.5 88.5V95"/><path d="M731.5 88.5V95"/><path d="M744.5 88.5V95"/><path d="M757.5 88.5V95"/><path d="M770.5 82V95"/><path d="M783.5 88.5V95"/><path d="M796.5 88.5V95"/><path d="M810.5 88.5V95"/><path d="M823.5 88.5V95"/><path d="M836.5 70V95"/><path d="M849.5 88.5V95"/><path d="M862.5 88.5V95"/><path d="M875.5 88.5V95"/><path d="M888.5 88.5V95"/><path d="M901.5 82V95"/><path d="M914.5 88.5V95"/><path d="M927.5 88.5V95"/><path d="M940.5 88.5V95"/><path d="M953.5 88.5V95"/><path d="M966.5 70V95"/><path d="M979.5 88.5V95"/><path d="M992.5 88.5V95"/><path d="M1005.5 88.5V95"/><path d="M1018.5 88.5V95"/><path d="M1031.5 82V95"/><path d="M1044.5 88.5V95"/><path d="M1057.5 88.5V95"/><path d="M1070.5 88.5V95"/><path d="M1083.5 88.5V95"/><path d="M1096.5 70V95"/><path d="M1109.5 88.5V95"/><path d="M1122.5 88.5V95"/><path d="M1135.5 88.5V95"/><path d="M1148.5 88.5V95"/><path d="M1161.5 82V95"/><path d="M1175.5 88.5V95"/><path d="M1188.5 88.5V95"/><path d="M1201.5 88.5V95"/><path d="M1214.5 88.5V95"/><path d="M1227.5 70V95"/><path d="M1240.5 88.5V95"/><path d="M1253.5 88.5V95"/><path d="M1266.5 88.5V95"/><path d="M1279.5 88.5V95"/><path d="M1292.5 82V95"/><path d="M1305.5 88.5V95"/><path d="M1318.5 88.5V95"/><path d="M1331.5 88.5V95"/><path d="M1344.5 88.5V95"/><path d="M1357.5 70V95"/><path d="M1370.5 88.5V95"/><path d="M1383.5 88.5V95"/><path d="M1396.5 88.5V95"/><path d="M1409.5 88.5V95"/><path d="M67 95.5H1418"/></g><g class="rl"><text x="186.7" y="82.3">-725</text><text x="317.0" y="82.3">-700</text><text x="447.4" y="82.3">-675</text><text x="577.7" y="82.3">-650</text><text x="708.0" y="82.3">-625</text><text x="838.4" y="82.3">-600</text><text x="968.8" y="82.3">-575</text><text x="1099.1" y="82.3">-550</text><text x="1229.5" y="82.3">-525</text><text x="1359.8" y="82.3">-500</text></g>
<g stroke="#8a8c8c" stroke-width="1" fill="none"><path d="M58.5 100.5H67"/><path d="M62 113.5H67"/><path d="M62 126.5H67"/><path d="M62 139.5H67"/><path d="M62 152.5H67"/><path d="M50 165.5H67"/><path d="M62 178.5H67"/><path d="M62 191.5H67"/><path d="M62 204.5H67"/><path d="M62 217.5H67"/><path d="M58.5 230.5H67"/><path d="M62 243.5H67"/><path d="M62 256.5H67"/><path d="M62 269.5H67"/><path d="M62 282.5H67"/><path d="M50 295.5H67"/><path d="M62 308.5H67"/><path d="M62 321.5H67"/><path d="M62 334.5H67"/><path d="M62 347.5H67"/><path d="M58.5 360.5H67"/><path d="M62 373.5H67"/><path d="M62 386.5H67"/><path d="M62 399.5H67"/><path d="M62 413.5H67"/><path d="M50 426.5H67"/><path d="M62 439.5H67"/><path d="M62 452.5H67"/><path d="M62 465.5H67"/><path d="M62 478.5H67"/><path d="M58.5 491.5H67"/><path d="M62 504.5H67"/><path d="M62 517.5H67"/><path d="M62 530.5H67"/><path d="M62 543.5H67"/><path d="M50 556.5H67"/><path d="M62 569.5H67"/><path d="M62 582.5H67"/><path d="M62 595.5H67"/><path d="M62 608.5H67"/><path d="M58.5 621.5H67"/><path d="M62 634.5H67"/><path d="M62 647.5H67"/><path d="M62 660.5H67"/><path d="M62 673.5H67"/><path d="M50 686.5H67"/><path d="M62 699.5H67"/><path d="M62 712.5H67"/><path d="M62 725.5H67"/><path d="M62 738.5H67"/><path d="M58.5 751.5H67"/><path d="M62 765.5H67"/><path d="M62 778.5H67"/><path d="M62 791.5H67"/><path d="M62 804.5H67"/><path d="M50 817.5H67"/><path d="M62 830.5H67"/><path d="M62 843.5H67"/><path d="M62 856.5H67"/><path d="M62 869.5H67"/><path d="M58.5 882.5H67"/><path d="M62 895.5H67"/><path d="M62 908.5H67"/><path d="M67.5 95V911"/></g><g class="rl"><text x="55" y="175.5">3</text><text x="55" y="186.2">7</text><text x="55" y="196.9">5</text><text x="55" y="305.9">4</text><text x="55" y="316.6">0</text><text x="55" y="327.3">0</text><text x="55" y="436.2">4</text><text x="55" y="446.9">2</text><text x="55" y="457.6">5</text><text x="55" y="566.6">4</text><text x="55" y="577.3">5</text><text x="55" y="588.0">0</text><text x="55" y="697.0">4</text><text x="55" y="707.7">7</text><text x="55" y="718.4">5</text><text x="55" y="827.4">5</text><text x="55" y="838.1">0</text><text x="55" y="848.8">0</text></g>
</svg>
<div class="a" style="left:1430px;top:86px;width:383px;height:812.6px;border:1px solid #cfc9c4;background:#f6f5f4"></div><div class="a" style="left:1431px;top:87px;width:381px;height:36.5px;background:#eae8e6;border-bottom:1px solid #cfc9c4"></div><div class="a" style="left:1567.7px;top:87px;width:153.7px;height:36px;background:#f6f5f4;border-left:1px solid #dad5d0;border-right:1px solid #dad5d0"></div><div class="a" style="left:1567.7px;top:120.2px;width:153.7px;height:3.3px;background:#3584e4"></div><svg class="i" style="left:1458px;top:96px" width="20" height="18" viewBox="0 0 20 18"><path d="M1.6 1v16" stroke="#d40000" stroke-width="1.3"/><g stroke="#000" stroke-width="1.1" fill="#b4cce6"><rect x="3.5" y="1.8" width="6" height="3.7"/><rect x="3.5" y="7.4" width="13.4" height="3.7"/><rect x="3.5" y="13" width="10.4" height="3.7"/></g></svg><svg class="i" style="left:1522.5px;top:96.5px" width="18" height="17" viewBox="0 0 18 17"><defs><linearGradient id="exg" x1="0" y1="0" x2="1" y2="1"><stop offset="0" stop-color="#fff"/><stop offset="1" stop-color="#d4d4d2"/></linearGradient></defs><path d="M1.2 1.2H8.6L12.2 4.8V16.2H1.2Z" fill="url(#exg)" stroke="#000" stroke-width="1.3" stroke-linejoin="round"/><path d="M8.6 1.4V4.8H12" fill="#fff" stroke="#000" stroke-width=".9"/><path d="M6.6 8.8H14.5" stroke="#000" stroke-width="1.4"/><path d="M13.6 6.3L16.8 8.8 13.6 11.3Z" fill="#000"/></svg><svg class="i" style="left:1580px;top:97px" width="16" height="16" viewBox="0 0 16 16"><rect x="1" y="1" width="14" height="14" fill="#fbfbf8"/><path d="M.2 .2H15.8L14 2.7H2.7V13.8L.2 15.8Z" fill="#000"/><path d="M.4 15.9L8.8 9.3 11.8 4.6 15.9 .8 14.3 6.3 15.9 7.8 10.4 12.4Z" fill="#000"/><path d="M3 14.2L9.5 9.8" stroke="#555" stroke-width=".6"/><path d="M14.1 5L15.9 7.7 13.3 7.4Z" fill="#f08000"/></svg><span class="t" style="left:1598.5px;top:96.8px;font-size:15px;line-height:15px;transform:scaleX(0.970);">Fill and Stroke</span><svg class="i" style="left:1695.5px;top:99.5px" width="11" height="11" viewBox="0 0 11 11"><path d="M1.2 1.2L9.8 9.8M9.8 1.2L1.2 9.8" stroke="#8b8e8f" stroke-width="2.3"/><path d="M1.2 1.2L9.8 9.8M9.8 1.2L1.2 9.8" stroke="#f6f5f4" stroke-width=".7"/></svg><div class="a" style="left:1432px;top:125px;width:379.5px;height:648px;border:1px solid #cfc9c4;background:#fcfcfc"></div><div class="a" style="left:1433px;top:126px;width:377.5px;height:36.5px;background:#eae8e6;border-bottom:1px solid #cfc9c4"></div><div class="a" style="left:1511.8px;top:159.4px;width:123px;height:3.4px;background:#3584e4"></div><svg class="i" style="left:1453px;top:136px;opacity:.8" width="16" height="16" viewBox="0 0 16 16"><defs><linearGradient id="pf1" x1="0" y1="0" x2="1" y2="1"><stop offset="0" stop-color="#9ab8d8"/><stop offset="1" stop-color="#fff"/></linearGradient></defs><rect width="16" height="16" fill="url(#pf1)"/></svg><span class="t" style="left:1474.0px;top:136.5px;font-size:15px;line-height:15px;transform:scaleX(0.901);color:#c0c2c3;">Fill</span><svg class="i" style="left:1522.5px;top:136px" width="16" height="16" viewBox="0 0 16 16"><defs><linearGradient id="pf2" x1="0" y1="0" x2="1" y2="1"><stop offset="0" stop-color="#000"/><stop offset=".5" stop-color="#444"/><stop offset="1" stop-color="#fff"/></linearGradient></defs><rect x=".75" y=".75" width="14.5" height="14.5" fill="none" stroke="url(#pf2)" stroke-width="1.5"/></svg><span class="t" style="left:1544.2px;top:136.5px;font-size:15px;line-height:15px;transform:scaleX(0.984);">Stroke paint</span><svg class="i" style="left:1654px;top:136px" width="18" height="17" viewBox="0 0 18 17"><path d="M1 3.5H13" stroke="#000" stroke-width="1.5"/><path d="M12 .5L16.8 3.5 12 6.5Z" fill="#000"/><path d="M1 9.3H16.6" stroke="#000" stroke-width="1.5" stroke-dasharray="2.6 1.3"/><path d="M1 15H16.6" stroke="#000" stroke-width="1.5"/></svg><span class="t" style="left:1675.5px;top:136.5px;font-size:15px;line-height:15px;transform:scaleX(0.951);color:#c0c2c3;">Stroke style</span><svg class="i" style="left:1454.5px;top:183.6px" width="9" height="9" viewBox="0 0 9 9"><path d="M1.2 1.2L7.8 7.8M7.8 1.2L1.2 7.8" stroke="#000" stroke-width="2.1" stroke-linecap="round"/></svg><div class="btn on" style="left:1477.3px;top:171.3px;width:35.3px;height:33.4px;border-radius:6px"></div><svg class="i" style="left:1487.3px;top:180.2px" width="16" height="16" viewBox="0 0 16 16"><rect x=".6" y=".6" width="14.8" height="14.8" fill="#9db9d9" stroke="#000" stroke-width="1.2"/></svg><svg class="i" style="left:1523.2px;top:180.2px" width="16" height="16" viewBox="0 0 16 16"><defs><linearGradient id="pt1" x1="0" y1="0" x2="1" y2="0"><stop offset="0" stop-color="#8fb0d4"/><stop offset="1" stop-color="#fff"/></linearGradient></defs><rect x=".6" y=".6" width="14.8" height="14.8" fill="url(#pt1)" stroke="#000" stroke-width="1.2"/></svg><svg class="i" style="left:1558.9px;top:180.2px" width="16" height="16" viewBox="0 0 16 16"><defs><radialGradient id="pt2"><stop offset="0" stop-color="#fff"/><stop offset="1" stop-color="#8fb0d4"/></radialGradient></defs><rect x=".6" y=".6" width="14.8" height="14.8" fill="url(#pt2)" stroke="#000" stroke-width="1.2"/></svg><svg class="i" style="left:1595.2px;top:180.2px" width="16" height="16" viewBox="0 0 16 16"><rect x=".6" y=".6" width="14.8" height="14.8" fill="#fff" stroke="#000" stroke-width="1.2"/><rect x="1.2" y="1.2" width="6.8" height="6.8" fill="#9db9d9"/><rect x="8" y="8" width="6.8" height="6.8" fill="#9db9d9"/></svg><svg class="i" style="left:1631.2px;top:180.2px" width="16" height="16" viewBox="0 0 16 16"><defs><clipPath id="pcl"><rect x="1" y="1" width="14" height="14"/></clipPath></defs><rect x=".6" y=".6" width="14.8" height="14.8" fill="#fff"/><path clip-path="url(#pcl)" d="M2.7 -2.2L5.8 0.9 2.7 4.0 -0.4 0.9ZM2.7 3.8L5.8 6.9 2.7 10.0 -0.4 6.9ZM2.7 9.8L5.8 12.9 2.7 16.0 -0.4 12.9ZM9.1 -2.2L12.2 0.9 9.1 4.0 6.0 0.9ZM9.1 3.8L12.2 6.9 9.1 10.0 6.0 6.9ZM9.1 9.8L12.2 12.9 9.1 16.0 6.0 12.9ZM15.5 -2.2L18.6 0.9 15.5 4.0 12.4 0.9ZM15.5 3.8L18.6 6.9 15.5 10.0 12.4 6.9ZM15.5 9.8L18.6 12.9 15.5 16.0 12.4 12.9Z" fill="#9db9d9"/><rect x=".6" y=".6" width="14.8" height="14.8" fill="none" stroke="#111" stroke-width="1.2"/></svg><svg class="i" style="left:1667px;top:180.2px" width="16" height="16" viewBox="0 0 16 16"><rect x=".6" y=".6" width="14.8" height="14.8" fill="#fff" stroke="#000" stroke-width="1.2"/><path d="M2 14.6V1.4" stroke="#9db9d9" stroke-width="1.8"/><path d="M1.2 13.9H14.8" stroke="#9db9d9" stroke-width="1.8"/><path d="M13.2 3V12.6H3.4" fill="none" stroke="#222" stroke-width="1"/></svg><span class="t" style="left:1706.6px;top:177.3px;font-size:21px;line-height:21px;color:#000;font-weight:bold;">?</span><div class="btn on" style="left:1730px;top:171.3px;width:35.6px;height:33.4px;border-radius:6px"></div><svg class="i" style="left:1739.5px;top:179.6px" width="17" height="17" viewBox="0 0 17 17"><path d="M8.5 16.6C5 16.6 .8 12 .6 7.5 .4 3.5 1.8 .8 4.6 .4 6.6 .1 7.8 2 8.5 3.6 9.2 2 10.4 .1 12.4 .4 15.2 .8 16.6 3.5 16.4 7.5 16.2 12 12 16.6 8.5 16.6Z" fill="#000"/><path d="M8.5 4C7.5 6.2 4.5 8.4 4.6 10.8 4.7 13 6.4 14 8.5 14 10.6 14 12.3 13 12.4 10.8 12.5 8.4 9.5 6.2 8.5 4Z" fill="#e6e5e2"/></svg><svg class="i" style="left:1775.7px;top:179.6px" width="17" height="17" viewBox="0 0 17 17"><path d="M8.5 16.6C5 16.6 .8 12 .6 7.5 .4 3.5 1.8 .8 4.6 .4 6.6 .1 7.8 2 8.5 3.6 9.2 2 10.4 .1 12.4 .4 15.2 .8 16.6 3.5 16.4 7.5 16.2 12 12 16.6 8.5 16.6Z" fill="#000"/></svg><span class="t" style="left:1440.8px;top:215.7px;font-size:16px;line-height:16px;transform:scaleX(0.901);font-weight:bold;">Flat color</span><div class="btn" style="left:1441.0px;top:238.1px;width:57.8px;height:33.6px;border-radius:6px"></div><span class="t" style="left:1456.7px;top:247.4px;font-size:15px;line-height:15px;transform:scaleX(0.823);">RGB</span><div class="btn on" style="left:1501.8px;top:238.1px;width:58.2px;height:33.6px;border-radius:6px"></div><span class="t" style="left:1518.5px;top:247.4px;font-size:15px;line-height:15px;transform:scaleX(0.862);">HSL</span><div class="btn" style="left:1562.9px;top:238.1px;width:57.8px;height:33.6px;border-radius:6px"></div><span class="t" style="left:1579.0px;top:247.4px;font-size:15px;line-height:15px;transform:scaleX(0.864);">HSV</span><div class="btn" style="left:1623.9px;top:238.1px;width:57.3px;height:33.6px;border-radius:6px"></div><span class="t" style="left:1633.0px;top:247.4px;font-size:15px;line-height:15px;transform:scaleX(0.904);">CMYK</span><div class="btn" style="left:1683.9px;top:238.1px;width:56.9px;height:33.6px;border-radius:6px"></div><span class="t" style="left:1692.1px;top:247.4px;font-size:15px;line-height:15px;transform:scaleX(0.968);">Wheel</span><div class="btn" style="left:1744.0px;top:238.1px;width:57.3px;height:33.6px;border-radius:6px"></div><span class="t" style="left:1757.8px;top:247.4px;font-size:15px;line-height:15px;transform:scaleX(0.883);">CMS</span><span class="t" style="left:1449.5px;top:284.2px;font-size:15px;line-height:15px;">H:</span><div class="a" style="left:1471.2px;top:275px;width:246.2px;height:33.6px;overflow:hidden;background:linear-gradient(90deg,#f00 0%,#ff0 16.67%,#0f0 33.33%,#0ff 50%,#00f 66.67%,#f0f 83.33%,#f00 100%)"><svg style="position:absolute;left:36.1px;top:0" width="12" height="6" viewBox="0 0 12 6"><path d="M1 .3H11L6 5.3Z" fill="#fff" stroke="#000" stroke-width="1"/></svg><svg style="position:absolute;left:36.1px;top:27.6px" width="12" height="6" viewBox="0 0 12 6"><path d="M1 5.7H11L6 .7Z" fill="#fff" stroke="#000" stroke-width="1"/></svg></div><div class="combo" style="left:1726.2px;top:275.2px;width:67.5px;height:33.4px;background:#fff"></div><div class="a" style="left:1759.5px;top:276.2px;width:1px;height:31.4px;background:#e4e0dc"></div><div class="a" style="left:1776.3px;top:276.2px;width:1px;height:31.4px;background:#e4e0dc"></div><span class="t" style="left:1729.2px;top:284.4px;font-size:15px;line-height:15px;transform:scaleX(0.883);color:#2e3436;">63</span><div class="a" style="left:1762.9px;top:291.4px;width:11px;height:1.6px;background:#8b8e8f"></div><div class="a" style="left:1780.0px;top:291.4px;width:11px;height:1.6px;background:#8b8e8f"></div><div class="a" style="left:1784.7px;top:286.7px;width:1.6px;height:11px;background:#8b8e8f"></div><span class="t" style="left:1449.5px;top:320.4px;font-size:15px;line-height:15px;">S:</span><div class="a" style="left:1471.2px;top:311.2px;width:246.2px;height:33.6px;overflow:hidden;background:linear-gradient(90deg,#888888,#f4ff0f)"><svg style="position:absolute;left:239.2px;top:0" width="12" height="6" viewBox="0 0 12 6"><path d="M1 .3H11L6 5.3Z" fill="#fff" stroke="#000" stroke-width="1"/></svg><svg style="position:absolute;left:239.2px;top:27.6px" width="12" height="6" viewBox="0 0 12 6"><path d="M1 5.7H11L6 .7Z" fill="#fff" stroke="#000" stroke-width="1"/></svg></div><div class="combo" style="left:1726.2px;top:311.4px;width:67.5px;height:33.4px;background:#fff"></div><div class="a" style="left:1759.5px;top:312.4px;width:1px;height:31.4px;background:#e4e0dc"></div><div class="a" style="left:1776.3px;top:312.4px;width:1px;height:31.4px;background:#e4e0dc"></div><span class="t" style="left:1729.2px;top:320.6px;font-size:15px;line-height:15px;transform:scaleX(0.930);color:#2e3436;">100</span><div class="a" style="left:1762.9px;top:327.59999999999997px;width:11px;height:1.6px;background:#8b8e8f"></div><div class="a" style="left:1780.0px;top:327.59999999999997px;width:11px;height:1.6px;background:#e2e2e2"></div><div class="a" style="left:1784.7px;top:322.9px;width:1.6px;height:11px;background:#e2e2e2"></div><span class="t" style="left:1449.5px;top:356.6px;font-size:15px;line-height:15px;">L:</span><div class="a" style="left:1471.2px;top:347.4px;width:246.2px;height:33.6px;overflow:hidden;background:linear-gradient(90deg,#000 0%,#f0ff00 50%,#fff 100%)"><svg style="position:absolute;left:123.6px;top:0" width="12" height="6" viewBox="0 0 12 6"><path d="M1 .3H11L6 5.3Z" fill="#fff" stroke="#000" stroke-width="1"/></svg><svg style="position:absolute;left:123.6px;top:27.6px" width="12" height="6" viewBox="0 0 12 6"><path d="M1 5.7H11L6 .7Z" fill="#fff" stroke="#000" stroke-width="1"/></svg></div><div class="combo" style="left:1726.2px;top:347.59999999999997px;width:67.5px;height:33.4px;background:#fff"></div><div class="a" style="left:1759.5px;top:348.59999999999997px;width:1px;height:31.4px;background:#e4e0dc"></div><div class="a" style="left:1776.3px;top:348.59999999999997px;width:1px;height:31.4px;background:#e4e0dc"></div><span class="t" style="left:1729.2px;top:356.8px;font-size:15px;line-height:15px;transform:scaleX(0.883);color:#2e3436;">53</span><div class="a" style="left:1762.9px;top:363.79999999999995px;width:11px;height:1.6px;background:#8b8e8f"></div><div class="a" style="left:1780.0px;top:363.79999999999995px;width:11px;height:1.6px;background:#8b8e8f"></div><div class="a" style="left:1784.7px;top:359.09999999999997px;width:1.6px;height:11px;background:#8b8e8f"></div><span class="t" style="left:1449.5px;top:392.6px;font-size:15px;line-height:15px;">A:</span><div class="a" style="left:1471.2px;top:383.4px;width:246.2px;height:33.6px;overflow:hidden;background-color:#a0a0a0;background-image:linear-gradient(45deg,#666 25%,transparent 25%,transparent 75%,#666 75%),linear-gradient(45deg,#666 25%,transparent 25%,transparent 75%,#666 75%);background-size:16px 16px;background-position:0 0,8px 8px"><div style="position:absolute;left:0;top:0;width:100%;height:100%;background:linear-gradient(90deg,rgba(244,255,15,0.15),rgba(244,255,15,1))"></div><svg style="position:absolute;left:170.4px;top:0" width="12" height="6" viewBox="0 0 12 6"><path d="M1 .3H11L6 5.3Z" fill="#fff" stroke="#000" stroke-width="1"/></svg><svg style="position:absolute;left:170.4px;top:27.6px" width="12" height="6" viewBox="0 0 12 6"><path d="M1 5.7H11L6 .7Z" fill="#fff" stroke="#000" stroke-width="1"/></svg></div><div class="combo" style="left:1726.2px;top:383.59999999999997px;width:67.5px;height:33.4px;background:#fff"></div><div class="a" style="left:1759.5px;top:384.59999999999997px;width:1px;height:31.4px;background:#e4e0dc"></div><div class="a" style="left:1776.3px;top:384.59999999999997px;width:1px;height:31.4px;background:#e4e0dc"></div><span class="t" style="left:1729.2px;top:392.8px;font-size:15px;line-height:15px;transform:scaleX(0.883);color:#2e3436;">72</span><div class="a" style="left:1762.9px;top:399.79999999999995px;width:11px;height:1.6px;background:#8b8e8f"></div><div class="a" style="left:1780.0px;top:399.79999999999995px;width:11px;height:1.6px;background:#8b8e8f"></div><div class="a" style="left:1784.7px;top:395.09999999999997px;width:1.6px;height:11px;background:#8b8e8f"></div><svg class="i" style="left:1444px;top:741px;opacity:.62" width="15" height="18" viewBox="0 0 15 18"><defs><linearGradient id="cmg" x1="0" y1="0" x2="0" y2="1"><stop offset="0" stop-color="#8cf08c"/><stop offset=".55" stop-color="#a8f4f4"/><stop offset="1" stop-color="#c8a0ff"/></linearGradient><radialGradient id="cmg2" cx=".95" cy=".62" r=".75"><stop offset="0" stop-color="#ffb0b0"/><stop offset=".45" stop-color="#fff6a8" stop-opacity=".8"/><stop offset="1" stop-color="#fff" stop-opacity="0"/></radialGradient><radialGradient id="cmg3" cx=".45" cy=".95" r=".4"><stop offset="0" stop-color="#ff90f0"/><stop offset="1" stop-color="#ff90f0" stop-opacity="0"/></radialGradient></defs><path d="M.3 1.3L13.6 11.3 3.3 16.7Z" fill="url(#cmg)"/><path d="M.3 1.3L13.6 11.3 3.3 16.7Z" fill="url(#cmg2)"/><path d="M.3 1.3L13.6 11.3 3.3 16.7Z" fill="url(#cmg3)"/></svg><svg class="i" style="left:1463px;top:742px" width="17" height="17" viewBox="0 0 17 17"><circle cx="8.2" cy="8.3" r="5.6" fill="none" stroke="#fccaca" stroke-width="4.8"/></svg><svg class="i" style="left:1494.8px;top:741.6px" width="16" height="17" viewBox="0 0 17 18"><path d="M10 5.8L12.2 8 4 15.8 2 16.4 2.4 14.3Z" fill="#b8d4ec" stroke="#3a5a7a" stroke-width=".8"/><path d="M8.8 4.5L13.4 9.3" stroke="#000" stroke-width="2.2" stroke-linecap="round"/><path d="M11.3 6.5C12 3.5 13.2 1.7 14.6 1.2 16.2 .8 16.8 2.6 15.8 4 14.6 5.6 13 5.6 11.3 6.5Z" fill="#000" stroke="#000" stroke-width="1.4" stroke-linejoin="round"/><circle cx="1.8" cy="17" r=".9" fill="#4a7ac0"/></svg><span class="t" style="left:1676.8px;top:742.8px;font-size:15px;line-height:15px;transform:scaleX(0.870);">RGBA:</span><div class="combo" style="left:1720.4px;top:733.6px;width:81.2px;height:33px;background:#fff"></div><span class="t" style="left:1729.7px;top:742.8px;font-size:15px;line-height:15px;transform:scaleX(1.034);color:#2e3436;">f4ff0fb7</span><span class="t" style="left:1581.2px;top:789.8px;font-size:15px;line-height:15px;">Blend mode:</span><div class="combo" style="left:1675.2px;top:780.6px;width:125.4px;height:33px"></div><span class="t" style="left:1687.3px;top:789.8px;font-size:15px;line-height:15px;transform:scaleX(1.023);">Normal</span><div class="arrow" style="left:1777px;top:794.2px"></div><div class="a" style="left:1432px;top:822px;width:379.5px;height:1px;background:#dcd8d4"></div><div class="a" style="left:1432.2px;top:831.3px;width:307.6px;height:31.2px;background:#e9e7e6;border:1px solid #cfc9c4;border-radius:3px"></div><div class="a" style="left:1432.2px;top:831.3px;width:2px;height:31.2px;background:#3584e4;border-radius:3px 0 0 3px"></div><span class="t" style="left:1437.6px;top:839.9px;font-size:15px;line-height:15px;transform:scaleX(0.934);color:#2e3436;">Blur (%)</span><span class="t" style="left:1742.6px;top:839.9px;font-size:15px;line-height:15px;transform:scaleX(0.859);color:#2e3436;">0.0</span><div class="a" style="left:1432.2px;top:863.7px;width:307.6px;height:31.2px;background:#e9e7e6;border:1px solid #cfc9c4;border-radius:3px"></div><div class="a" style="left:1432.2px;top:863.7px;width:221px;height:31.2px;background:#3584e4;border-radius:3px 0 0 3px"></div><span class="t" style="left:1437.6px;top:872.1px;font-size:15px;line-height:15px;transform:scaleX(0.966);color:#fff;">Opacity (%)</span><span class="t" style="left:1743.0px;top:872.1px;font-size:15px;line-height:15px;transform:scaleX(0.882);color:#2e3436;">71.8</span><div class="a" style="left:1777.5px;top:832px;width:1px;height:62px;background:#e6e2de"></div><div class="a" style="left:1794.5px;top:832px;width:1px;height:62px;background:#e6e2de"></div><div class="a" style="left:1780.5px;top:847px;width:11px;height:1.6px;background:#dcdcdc"></div><div class="a" style="left:1797.5px;top:847px;width:11px;height:1.6px;background:#6e7172"></div><div class="a" style="left:1802.2px;top:842.3px;width:1.6px;height:11px;background:#6e7172"></div><div class="a" style="left:1780.5px;top:879.2px;width:11px;height:1.6px;background:#6e7172"></div><div class="a" style="left:1797.5px;top:879.2px;width:11px;height:1.6px;background:#6e7172"></div><div class="a" style="left:1802.2px;top:874.5px;width:1.6px;height:11px;background:#6e7172"></div><svg class="i" style="left:1420px;top:484px" width="8" height="16" viewBox="0 0 8 16"><g fill="#8a8e90"><circle cx="4" cy="3.6" r="1.4"/><circle cx="4" cy="8" r="1.4"/><circle cx="4" cy="12.5" r="1.4"/></g></svg><div class="a" style="left:1833px;top:220px;width:3px;height:1px;background:#dad8d6"></div><div class="a" style="left:1833px;top:304px;width:3px;height:1px;background:#dad8d6"></div><div class="a" style="left:1833px;top:388px;width:3px;height:1px;background:#dad8d6"></div><div class="a" style="left:1833px;top:508px;width:3px;height:1px;background:#dad8d6"></div><div class="a" style="left:1833px;top:629px;width:3px;height:1px;background:#dad8d6"></div><div class="a" style="left:1833px;top:713px;width:3px;height:1px;background:#dad8d6"></div><svg class="hl" width="1836" height="911" viewBox="0 0 1836 911">
<path d="M1592.6 90.4C1605 89.6 1617 89 1629.2 88.4 1642 87.7 1655 87 1668.7 86.4 1682 85.6 1695 84.8 1708.2 84L1727 83V97.8C1725 98.3 1723 99 1722 99.8 1721.3 102 1721.3 104 1720.5 105.7 1719.8 107.7 1718.8 109.2 1717.1 110.1 1714.5 111.5 1711.5 112.2 1708.2 112.6 1701.5 113.4 1695 113.8 1688.4 114.1H1658.8L1636.1 114.6C1635.5 116.5 1634.8 117.6 1633.1 118 1629.8 118.9 1626.5 119.2 1623.2 119 1618.5 118.6 1614 117.5 1609.4 117 1604.5 116.5 1599.6 116.2 1594.6 116.1H1582.7L1582.2 99.8 1592.6 98.3Z" fill="#fff000"/>
<path d="M1529 128.5C1545 128 1560 129 1580 130.8 1595 131.5 1612 129.5 1622 131.5 1625.5 133 1624.8 137 1625 141V150C1624.5 153.5 1622 155 1618 156 1608 158.5 1597 159 1585 159.2 1570 159.6 1555 159.4 1540 159H1530L1529 150Z" fill="#fffc00"/>
<path d="M1518.4 177.5C1518.6 175 1519.3 173.2 1520.5 172.1 1522 171 1524 170.8 1526 170.3 1528 169.3 1529.6 168 1531.4 167.2 1533.7 166.3 1536.2 166 1538.6 166 1540.7 166 1542.8 166 1544.7 166.6 1546.5 167.4 1547.6 168.7 1548.3 170.3 1549.2 171.8 1549.9 173.4 1550.1 175.1V191.4C1550 193.3 1549.6 195.1 1548.9 196.8 1547.6 199.3 1545.6 201.2 1543.5 202.9 1541.3 204.6 1538.8 206.1 1536.2 207.1 1533.7 207.9 1531 208.3 1528.4 208 1526.3 207.7 1524.7 206.7 1523.5 205.3 1522.1 203.7 1521.2 201.8 1520.5 199.8 1519.7 198 1518.9 196.3 1518.4 194.4Z" fill="#ffec00"/>
<path d="M1437 866.8L1443.5 866.4 1449 870.1C1492 870.4 1535 870.4 1577.5 870.1 1602.5 869.8 1627.5 869.2 1652.7 868.4 1678.5 867.5 1704.5 866.7 1730 866.2L1771.4 865.8C1775 866 1777.5 867 1778 869V885.4C1777.5 888 1775 889 1771.4 889.3 1761 890.3 1751 890.8 1741 890.8 1730 890.8 1719 889.3 1708.2 889.3 1693.5 889.3 1679 890.5 1664.7 890.8 1635.5 891.4 1606.5 891.7 1577.5 891.9 1548.5 892.3 1519.5 892.8 1490.4 893 1481.5 893 1472.5 892.8 1464.2 891.9 1458.5 891.2 1453 889.8 1449 887.5L1437 885.4Z" fill="#fff400"/>
</svg>
<svg class="i" style="left:1523.2px;top:180.2px" width="20" height="16" viewBox="0 0 20 16"><path d="M3.7 8.8C5.5 8 7 7.7 7.6 6.4 8.1 5.7 8.8 6 9.3 6.8 10.5 7.7 12.5 8 14.8 8.2 13.5 9.8 11.2 10.8 9.5 11.6 8.5 12.1 7.8 12 7 11.6 5.8 11 4.6 10 3.7 8.8Z" fill="#dfe7f6"/><path d="M16.6 2.4L19.2 4.2 16.6 6.2Z" fill="#fff"/></svg>
</body></html>
